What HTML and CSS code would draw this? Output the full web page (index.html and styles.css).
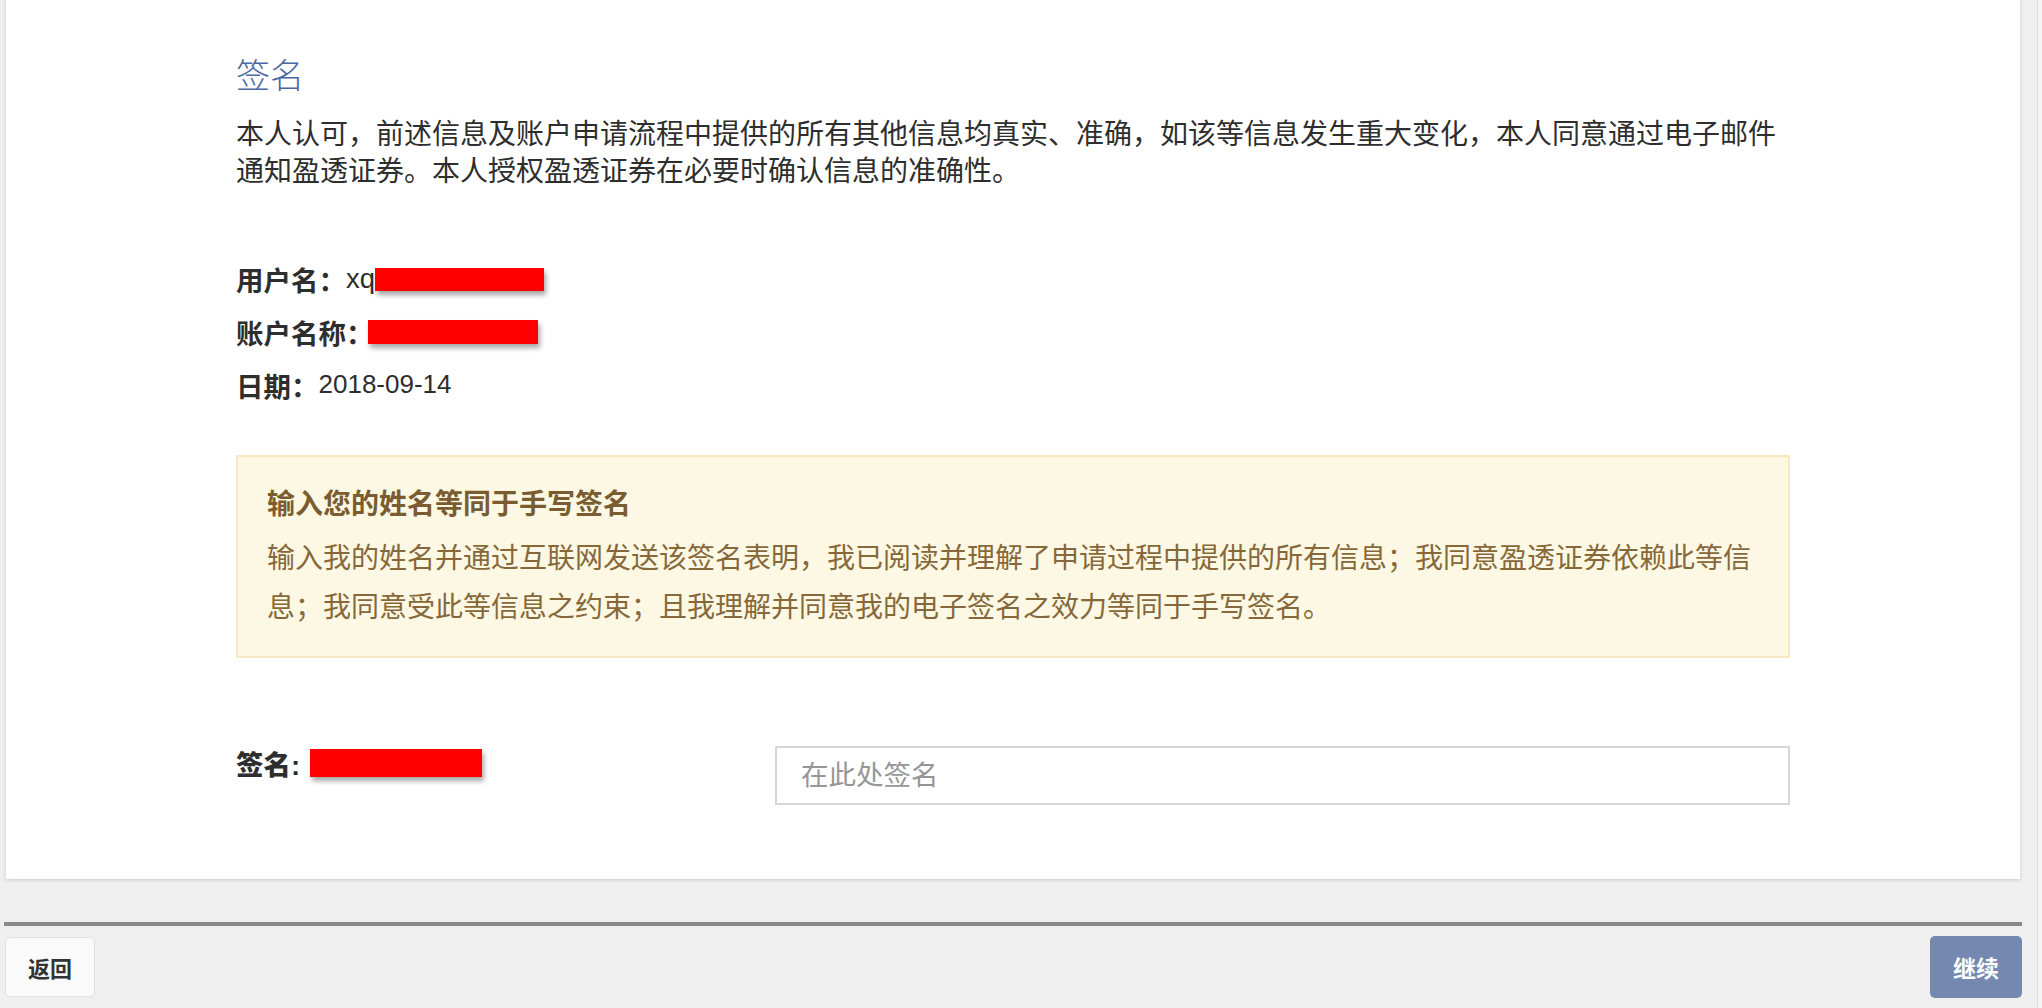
FILE: index.html
```html
<!DOCTYPE html>
<html lang="zh-CN">
<head>
<meta charset="utf-8">
<title>签名</title>
<link rel="stylesheet" href="styles.css">
</head>
<body>
<div class="page">
  <main class="card">
    <h2 class="title">签名</h2>
    <p class="intro">本人认可，前述信息及账户申请流程中提供的所有其他信息均真实、准确，如该等信息发生重大变化，本人同意通过电子邮件通知盈透证券。本人授权盈透证券在必要时确认信息的准确性。</p>
    <dl class="info">
      <div class="info-row"><dt>用户名：</dt><dd class="latin">xq<span class="redact redact-user"></span></dd></div>
      <div class="info-row"><dt>账户名称：</dt><dd><span class="redact redact-account"></span></dd></div>
      <div class="info-row"><dt>日期：</dt><dd class="latin date">2018-09-14</dd></div>
    </dl>
    <div class="notice">
      <h4 class="notice-title">输入您的姓名等同于手写签名</h4>
      <p class="notice-text">输入我的姓名并通过互联网发送该签名表明，我已阅读并理解了申请过程中提供的所有信息；我同意盈透证券依赖此等信息；我同意受此等信息之约束；且我理解并同意我的电子签名之效力等同于手写签名。</p>
    </div>
    <div class="sign-row">
      <div class="sign-label"><strong>签名:</strong><span class="redact redact-sign"></span></div>
      <input class="sign-input" type="text" placeholder="在此处签名">
    </div>
  </main>
  <div class="divider"></div>
  <footer class="actions">
    <button class="btn btn-back" type="button">返回</button>
    <button class="btn btn-next" type="button">继续</button>
  </footer>
</div>
<div class="scroll-track"></div>
</body>
</html>
```

FILE: styles.css
```css
* { box-sizing: border-box; }
html, body { margin: 0; height: 100%; }
body {
  background: #efefef;
  font-family: "Liberation Sans", "Noto Sans CJK SC", sans-serif;
  color: #2e2e2e;
  display: flex;
  overflow: hidden;
}
.page {
  flex: 0 0 2022px;
  width: 2022px;
  padding-left: 4px;
}
.card {
  margin: 0 2px;
  background: #fff;
  box-shadow: 0 1px 4px rgba(0, 0, 0, 0.16);
  padding: 54px 230px 74px;
}
.title {
  margin: 0;
  font-size: 34px;
  line-height: 44px;
  font-weight: 300;
  color: #4a67a1;
}
.intro {
  margin: 18px 0 0;
  font-size: 28px;
  line-height: 37px;
}
.info { margin: 62px 0 0; }
.info-row {
  display: flex;
  align-items: center;
  height: 53px;
  font-size: 27.5px;
}
.info-row dt { font-weight: 700; }
.info-row dd { margin: 0; display: flex; align-items: center; }
.date { font-size: 26px; }
.redact {
  display: inline-block;
  background: #ff0000;
  box-shadow: 2px 4px 5px rgba(0, 0, 0, 0.35);
}
.redact-user { width: 169px; height: 23px; margin-top: 2px; }
.redact-account { width: 170px; height: 24px; margin-left: -6px; }
.notice {
  margin-top: 44px;
  background: #fcf8e3;
  border: 2px solid #f8e7c3;
  padding: 30px 30px 24px 29px;
  color: #8a6d3b;
}
.notice-title {
  margin: 0 0 11px;
  font-size: 28px;
  line-height: 36px;
  font-weight: 700;
  color: #7b5c30;
}
.notice-text {
  margin: 0;
  font-size: 28px;
  line-height: 49px;
  color: #86683a;
}
.sign-row {
  margin-top: 88px;
  display: grid;
  grid-template-columns: 539px 1fr;
  align-items: start;
}
.sign-label {
  display: flex;
  align-items: center;
  height: 34px;
  font-size: 27.5px;
  font-weight: 700;
}
.redact-sign { width: 172px; height: 28px; margin-left: 10px; }
.sign-input {
  width: 100%;
  height: 59px;
  border: 2px solid #d6d6d6;
  border-radius: 0;
  padding: 0 24px;
  font-family: "Liberation Sans", "Noto Sans CJK SC", sans-serif;
  font-size: 27.5px;
  color: #333;
  background: #fff;
  outline: none;
}
.sign-input::placeholder { color: #969696; }
.divider {
  margin-top: 43px;
  height: 4px;
  background: #898989;
}
.actions {
  display: flex;
  justify-content: space-between;
  align-items: center;
  margin-top: 10px;
  padding-left: 1px;
}
.btn {
  font-family: "Liberation Sans", "Noto Sans CJK SC", sans-serif;
  font-weight: 700;
  border-radius: 5px;
  cursor: pointer;
  padding: 0;
}
.btn-back {
  width: 90px;
  height: 60px;
  background: #fafafa;
  border: 1px solid #e2e2e2;
  color: #333;
  font-size: 22px;
}
.btn-next {
  width: 92px;
  height: 62px;
  background: #7589b0;
  border: 0;
  color: #fff;
  font-size: 23px;
}
.scroll-track {
  margin-left: auto;
  width: 5px;
  border-left: 1px solid #dedede;
  background: #f5f5f5;
}
```
